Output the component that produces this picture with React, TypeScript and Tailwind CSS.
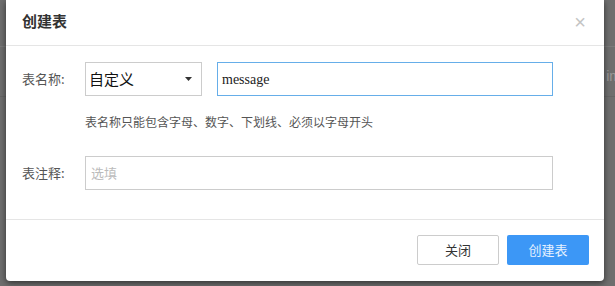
import React from "react";

export default function App() {
  const cjk = { fontFamily: '"Noto Sans CJK SC", "Noto Sans", sans-serif' };
  return (
    <div className="relative w-[615px] h-[286px] overflow-hidden bg-[#6e6e6e]" style={cjk}>
      {/* background page (dimmed) */}
      <div className="flex flex-col">
        <div className="h-[47px] border-b border-[#7a7a7a]" />
        <div className="h-[50px] border-b border-[#656565] flex items-center justify-end pt-[10px]">
          <span className="text-[14px] text-[#9a9a9a] mr-[-6px]" style={{ fontFamily: '"Liberation Sans", sans-serif' }}>im</span>
        </div>
      </div>

      {/* modal */}
      <div className="absolute left-[6px] top-0 w-[598px] h-[281px] bg-white rounded-b-[4px] shadow-[0_2px_6px_rgba(0,0,0,0.55)] flex flex-col">
        <div className="h-[46px] border-b border-[#e5e5e5] flex items-center justify-between pl-[16px] pr-[18px]">
          <span className="text-[15px] font-bold text-[#333] leading-none mt-[-4px]">创建表</span>
          <span className="text-[20px] text-[#c4c4c4] leading-none mt-[-2px]" style={{ fontFamily: '"Liberation Sans", sans-serif' }}>×</span>
        </div>

        <div className="h-[174px] border-b border-[#e5e5e5] pl-[16px] pt-[16px] flex flex-col">
          <div className="flex items-center h-[34px]">
            <span className="w-[63px] text-[13px] text-[#555]">表名称:</span>
            <div className="w-[117px] h-[34px] border border-[#ccc] flex items-center justify-between pl-[3px] pr-[9px]">
              <span className="text-[15px] text-[#111]">自定义</span>
              <svg width="7" height="4" viewBox="0 0 7 4"><path d="M0 0h7L3.5 4z" fill="#333" /></svg>
            </div>
            <div className="ml-[15px] w-[336px] h-[34px] border border-[#66aee9] flex items-center pl-[4px]">
              <span className="text-[14px] text-[#222]" style={{ fontFamily: '"Liberation Serif", serif' }}>message</span>
            </div>
          </div>
          <div className="pl-[63px] mt-[18px] text-[12px] text-[#555] leading-[16px]">表名称只能包含字母、数字、下划线、必须以字母开头</div>
          <div className="flex items-center h-[34px] mt-[26px]">
            <span className="w-[63px] text-[13px] text-[#555]">表注释:</span>
            <div className="w-[468px] h-[34px] border border-[#ccc] flex items-center pl-[5px]">
              <span className="text-[13px] text-[#bbb]">选填</span>
            </div>
          </div>
        </div>

        <div className="flex justify-end gap-[8px] pt-[15px] pr-[15px]">
          <button className="w-[82px] h-[30px] border border-[#ccc] rounded-[2px] bg-white text-[13px] text-[#333]">关闭</button>
          <button className="w-[82px] h-[30px] rounded-[2px] bg-[#3c97f6] text-[13px] text-[#e6f1ff]">创建表</button>
        </div>
      </div>
    </div>
  );
}
